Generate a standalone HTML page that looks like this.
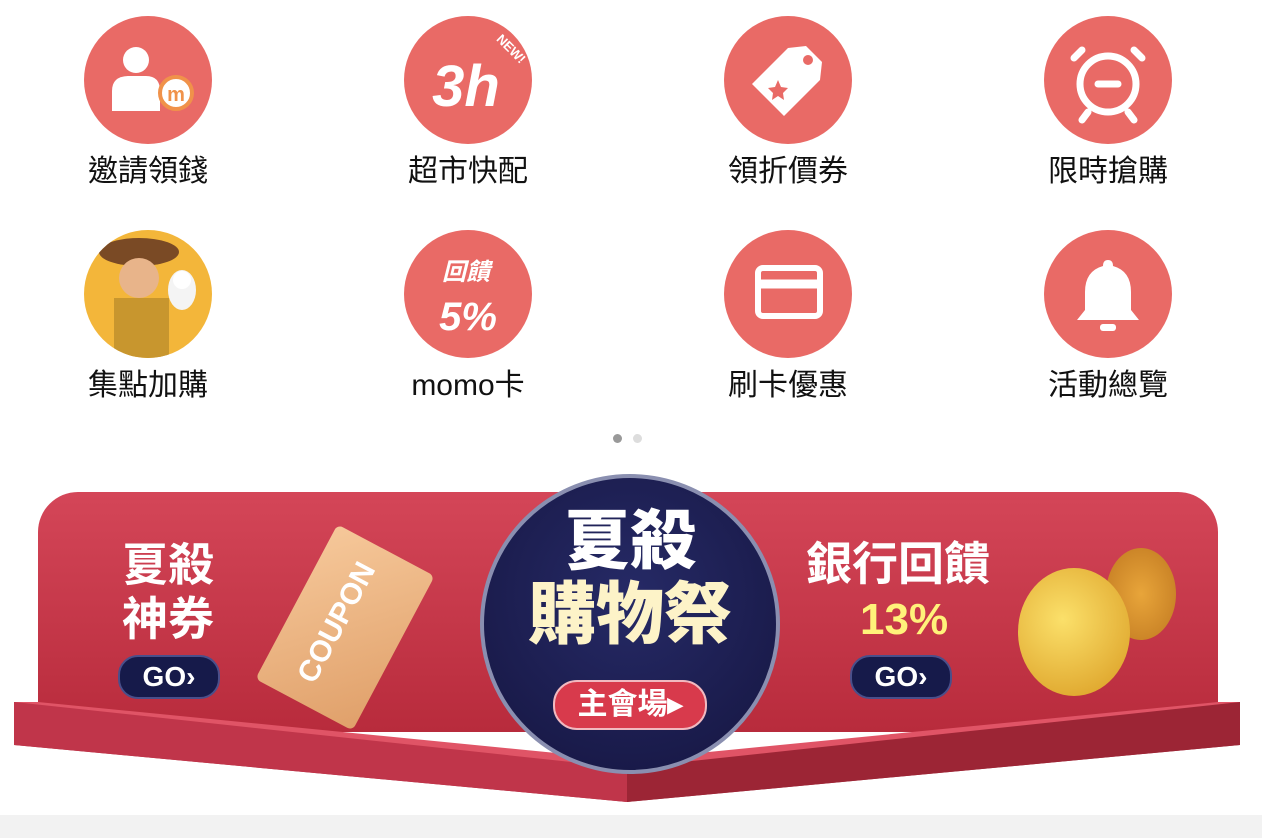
<!DOCTYPE html>
<html><head><meta charset="utf-8"><style>
body{margin:0;width:1262px;height:838px;background:#fff;position:relative;overflow:hidden;font-family:"Liberation Sans","Noto Sans CJK TC",sans-serif}
.it{position:absolute;width:200px;text-align:center}
.c{width:128px;height:128px;border-radius:50%;background:#e96a66;margin:0 auto;position:relative;overflow:hidden}
.l{font-size:30px;color:#111;margin-top:10px;line-height:36px}
.a{position:absolute}
.w{color:#fff;font-weight:bold}
.go{position:absolute;width:98px;height:40px;border-radius:20px;background:#161a4a;border:2px solid #4a4f8a;color:#fff;font:bold 28px "Liberation Sans",sans-serif;text-align:center;line-height:40px}
</style></head><body>
<div class="it" style="left:48px;top:16px"><div class="c">
<svg width="128" height="128"><circle cx="52" cy="44" r="13" fill="#fff"/><path d="M28 95 V75 Q28 60 45 60 H62 Q76 60 76 75 V95Z" fill="#fff"/><circle cx="92" cy="77" r="16" fill="#fff" stroke="#f0924a" stroke-width="4"/><text x="92" y="85" font-size="20" font-weight="bold" fill="#f0924a" text-anchor="middle" font-family="Liberation Sans">m</text></svg>
</div><div class="l">邀請領錢</div></div>
<div class="it" style="left:368px;top:16px"><div class="c">
<svg width="128" height="128"><text x="62" y="90" font-size="58" font-weight="bold" font-style="italic" fill="#fff" text-anchor="middle" font-family="Liberation Sans">3h</text><text x="104" y="36" font-size="13" font-weight="bold" fill="#fff" transform="rotate(45 104 36)" text-anchor="middle" font-family="Liberation Sans">NEW!</text></svg>
</div><div class="l">超市快配</div></div>
<div class="it" style="left:688px;top:16px"><div class="c">
<svg width="128" height="128"><path d="M82 30 L98 46 L96 64 L60 100 L28 68 L64 32Z" fill="#fff"/><circle cx="84" cy="44" r="5" fill="#e96a66"/><path d="M54 64 l3 7 7 1-5 5 1 7-6-4-6 4 1-7-5-5 7-1z" fill="#e96a66"/></svg>
</div><div class="l">領折價券</div></div>
<div class="it" style="left:1008px;top:16px"><div class="c">
<svg width="128" height="128" fill="none" stroke="#fff" stroke-width="7"><circle cx="64" cy="68" r="28"/><path d="M54 68h20M38 34l-8 8M90 34l8 8M44 96l-6 8M84 96l6 8" stroke-linecap="round"/></svg>
</div><div class="l">限時搶購</div></div>
<div class="it" style="left:48px;top:230px"><div class="c" style="background:#f3b63a">
<svg width="128" height="128"><ellipse cx="55" cy="22" rx="40" ry="14" fill="#7a4a25"/><circle cx="55" cy="48" r="20" fill="#e8b48a"/><rect x="30" y="68" width="55" height="60" fill="#c8962e"/><ellipse cx="98" cy="60" rx="14" ry="20" fill="#f4f4f4"/><circle cx="98" cy="50" r="9" fill="#fff"/></svg>
</div><div class="l">集點加購</div></div>
<div class="it" style="left:368px;top:230px"><div class="c">
<svg width="128" height="128"><text x="62" y="50" font-size="24" font-weight="bold" font-style="italic" fill="#fff" text-anchor="middle" font-family="Noto Sans CJK TC">回饋</text><text x="64" y="100" font-size="40" font-weight="bold" font-style="italic" fill="#fff" text-anchor="middle" font-family="Liberation Sans">5%</text></svg>
</div><div class="l">momo卡</div></div>
<div class="it" style="left:688px;top:230px"><div class="c">
<svg width="128" height="128" fill="none" stroke="#fff" stroke-width="6"><rect x="34" y="38" width="62" height="48" rx="5"/><path d="M34 54h62" stroke-width="9"/></svg>
</div><div class="l">刷卡優惠</div></div>
<div class="it" style="left:1008px;top:230px"><div class="c">
<svg width="128" height="128"><path d="M64 30 q5 0 5 6 q18 5 18 26 v18 l8 10 H33 l8-10 V62 q0-21 18-26 q0-6 5-6z" fill="#fff"/><rect x="56" y="94" width="16" height="7" rx="3" fill="#fff"/></svg>
</div><div class="l">活動總覽</div></div>
<div class="a" style="left:613px;top:434px;width:9px;height:9px;border-radius:50%;background:#999"></div>
<div class="a" style="left:633px;top:434px;width:9px;height:9px;border-radius:50%;background:#ddd"></div>
<div class="a" style="left:38px;top:492px;width:1180px;height:240px;border-radius:40px 40px 0 0;background:linear-gradient(#d44658,#b82b3c)"></div>
<svg class="a" style="left:0;top:690px" width="1262" height="120"><polygon points="14,12 38,12 627,74 1218,12 1240,12 1240,55 627,112 14,55" fill="#b52c3f"/><polygon points="14,12 627,74 627,112 14,55" fill="#c0354a"/><polygon points="1240,12 627,74 627,112 1240,55" fill="#9c2535"/><polygon points="14,12 38,12 627,70 1218,12 1240,12 627,78" fill="#e05466"/></svg>
<div class="a w" style="left:122px;top:538px;font-size:46px;line-height:54px;width:100px">夏殺<br>神券</div>
<div class="go" style="left:118px;top:655px">GO&#x203A;</div>
<div class="a" style="left:290px;top:540px;width:110px;height:175px;background:linear-gradient(135deg,#f6c89a,#e0a06a);transform:rotate(28deg);border-radius:6px"><div style="color:#fff;font:bold 30px 'Liberation Sans';transform:rotate(-90deg);position:absolute;left:-20px;top:70px">COUPON</div></div>
<div class="a w" style="left:806px;top:537px;font-size:46px;line-height:54px">銀行回饋</div>
<div class="a" style="left:860px;top:595px;font:bold 44px 'Liberation Sans';color:#fff27a">13%</div>
<div class="go" style="left:850px;top:655px">GO&#x203A;</div>
<div class="a" style="left:1106px;top:548px;width:70px;height:92px;border-radius:50%;background:radial-gradient(#e8a53a,#c07820)"></div>
<div class="a" style="left:1018px;top:568px;width:112px;height:128px;border-radius:50%;background:radial-gradient(circle at 40% 40%,#fbe06a,#d99a20)"></div>
<div class="a" style="left:480px;top:474px;width:292px;height:292px;border-radius:50%;background:radial-gradient(circle at 50% 40%,#262a66,#151540);border:4px solid #8a8fb0"></div>
<div class="a w" style="left:480px;top:505px;width:300px;text-align:center;font-size:66px;line-height:72px;font-weight:900">夏殺</div>
<div class="a" style="left:480px;top:578px;width:300px;text-align:center;font-size:68px;line-height:74px;font-weight:900;color:#fdf3c8">購物祭</div>
<div class="a" style="left:553px;top:680px;width:150px;height:46px;border-radius:24px;background:#d83a4c;border:2px solid #f1b9c0;color:#fff;font-size:30px;font-weight:bold;text-align:center;line-height:46px">主會場▸</div>
<div class="a" style="left:0;top:815px;width:1262px;height:23px;background:#f2f2f2"></div>
</body></html>
